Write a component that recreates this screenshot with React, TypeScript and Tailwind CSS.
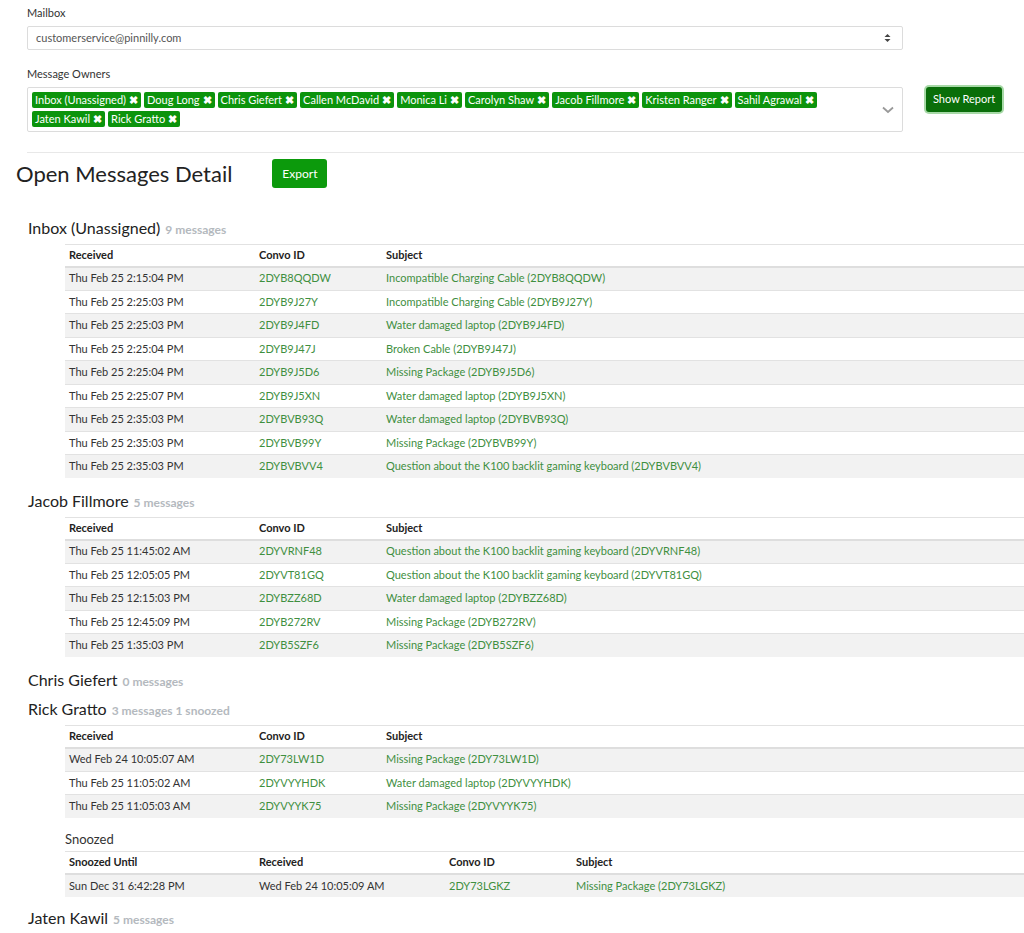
import React from "react";

type Row = [string, string, string];

const inbox: Row[] = [
  ["Thu Feb 25 2:15:04 PM", "2DYB8QQDW", "Incompatible Charging Cable (2DYB8QQDW)"],
  ["Thu Feb 25 2:25:03 PM", "2DYB9J27Y", "Incompatible Charging Cable (2DYB9J27Y)"],
  ["Thu Feb 25 2:25:03 PM", "2DYB9J4FD", "Water damaged laptop (2DYB9J4FD)"],
  ["Thu Feb 25 2:25:04 PM", "2DYB9J47J", "Broken Cable (2DYB9J47J)"],
  ["Thu Feb 25 2:25:04 PM", "2DYB9J5D6", "Missing Package (2DYB9J5D6)"],
  ["Thu Feb 25 2:25:07 PM", "2DYB9J5XN", "Water damaged laptop (2DYB9J5XN)"],
  ["Thu Feb 25 2:35:03 PM", "2DYBVB93Q", "Water damaged laptop (2DYBVB93Q)"],
  ["Thu Feb 25 2:35:03 PM", "2DYBVB99Y", "Missing Package (2DYBVB99Y)"],
  ["Thu Feb 25 2:35:03 PM", "2DYBVBVV4", "Question about the K100 backlit gaming keyboard (2DYBVBVV4)"],
];

const jacob: Row[] = [
  ["Thu Feb 25 11:45:02 AM", "2DYVRNF48", "Question about the K100 backlit gaming keyboard (2DYVRNF48)"],
  ["Thu Feb 25 12:05:05 PM", "2DYVT81GQ", "Question about the K100 backlit gaming keyboard (2DYVT81GQ)"],
  ["Thu Feb 25 12:15:03 PM", "2DYBZZ68D", "Water damaged laptop (2DYBZZ68D)"],
  ["Thu Feb 25 12:45:09 PM", "2DYB272RV", "Missing Package (2DYB272RV)"],
  ["Thu Feb 25 1:35:03 PM", "2DYB5SZF6", "Missing Package (2DYB5SZF6)"],
];

const rick: Row[] = [
  ["Wed Feb 24 10:05:07 AM", "2DY73LW1D", "Missing Package (2DY73LW1D)"],
  ["Thu Feb 25 11:05:02 AM", "2DYVYYHDK", "Water damaged laptop (2DYVYYHDK)"],
  ["Thu Feb 25 11:05:03 AM", "2DYVYYK75", "Missing Package (2DYVYYK75)"],
];

const owners = [
  "Inbox (Unassigned)",
  "Doug Long",
  "Chris Giefert",
  "Callen McDavid",
  "Monica Li",
  "Carolyn Shaw",
  "Jacob Fillmore",
  "Kristen Ranger",
  "Sahil Agrawal",
  "Jaten Kawil",
  "Rick Gratto",
];

function Tag({ name }: { name: string }) {
  return (
    <span className="inline-flex items-center h-[16px] px-[3px] rounded-[2px] bg-[#0c940c] text-white text-[11px] leading-[16px] gap-[3px]">
      {name}
      <span className="font-bold text-[11px]">✖</span>
    </span>
  );
}

function MsgTable({ rows }: { rows: Row[] }) {
  return (
    <table className="w-[959px] border-collapse text-[11px] table-fixed">
      <colgroup>
        <col className="w-[190px]" />
        <col className="w-[127px]" />
        <col />
      </colgroup>
      <thead>
        <tr className="border-t border-[#e2e2e2] border-b-2 border-b-[#dedede]">
          <th className="text-left font-bold px-[4px] h-[22px] text-[#222]">Received</th>
          <th className="text-left font-bold px-[4px] text-[#222]">Convo ID</th>
          <th className="text-left font-bold px-[4px] text-[#222]">Subject</th>
        </tr>
      </thead>
      <tbody>
        {rows.map((r, i) => (
          <tr key={i} className={(i % 2 === 0 ? "bg-[#f2f2f2] " : "bg-white ") + "border-t border-[#e2e2e2]"}>
            <td className="px-[4px] h-[23.5px] text-[#333]">{r[0]}</td>
            <td className="px-[4px] text-[#3f8f3f]">{r[1]}</td>
            <td className="px-[4px] text-[#3f8f3f]">{r[2]}</td>
          </tr>
        ))}
      </tbody>
    </table>
  );
}

function SectionHead({ name, meta }: { name: string; meta: string }) {
  return (
    <div className="pl-[28px] flex items-baseline gap-[5px] h-[18px]">
      <span className="text-[16px] text-[#222] leading-[18px]">{name}</span>
      <span className="text-[12px] font-bold text-[#b4b9be]">{meta}</span>
    </div>
  );
}

export default function App() {
  return (
    <div className="w-[1024px] overflow-hidden bg-white text-[#333]" style={{ fontFamily: "Lato, 'Liberation Sans', sans-serif" }}>
      <div className="pl-[27px] pt-[5px]">
        <div className="text-[11px] text-[#333] h-[15px] leading-[15px]">Mailbox</div>
        <div className="mt-[6px] w-[876px] h-[24px] border border-[#dcdcdc] rounded-[2px] flex items-center justify-between px-[8px]">
          <span className="text-[11px] text-[#555]">customerservice@pinnilly.com</span>
          <svg width="7" height="10" viewBox="0 0 7 10" className="mr-[3px]">
            <path d="M3.5 1 L6.5 4 H0.5 Z" fill="#444" />
            <path d="M3.5 9 L6.5 6 H0.5 Z" fill="#444" />
          </svg>
        </div>
        <div className="mt-[16px] text-[11px] text-[#333] h-[15px] leading-[15px]">Message Owners</div>
        <div className="mt-[6px] flex items-start gap-[23px]">
          <div className="w-[876px] h-[45px] border border-[#dcdcdc] rounded-[2px] flex items-start justify-between pl-[4px] pr-[6px] pt-[4px]">
            <div className="flex flex-wrap gap-x-[3px] gap-y-[3px] w-[800px]">
              {owners.map((o) => (
                <Tag key={o} name={o} />
              ))}
            </div>
            <svg width="12" height="8" viewBox="0 0 12 8" className="mt-[14px] mr-[2px]">
              <path d="M1 1.5 L6 6 L11 1.5" stroke="#999" strokeWidth="1.8" fill="none" />
            </svg>
          </div>
          <button className="h-[25px] px-[7px] rounded-[3px] bg-[#0a6e0a] text-white text-[11px] shadow-[0_0_0_2px_rgba(60,170,60,0.45)]">
            Show Report
          </button>
        </div>
        <div className="mt-[20px] border-t border-[#e8e8e8]" />
      </div>
      <div className="pl-[16px] mt-[6px] flex items-center gap-[40px] h-[29px]">
        <h1 className="text-[22px] text-[#222] leading-[29px]">Open Messages Detail</h1>
        <button className="h-[29px] w-[55px] rounded-[3px] bg-[#0c9a0c] text-white text-[12px]">Export</button>
      </div>

      <div className="mt-[31px]">
        <SectionHead name="Inbox (Unassigned)" meta="9 messages" />
        <div className="pl-[65px] mt-[7px]">
          <MsgTable rows={inbox} />
        </div>
      </div>

      <div className="mt-[14px]">
        <SectionHead name="Jacob Fillmore" meta="5 messages" />
        <div className="pl-[65px] mt-[7px]">
          <MsgTable rows={jacob} />
        </div>
      </div>

      <div className="mt-[14px]">
        <SectionHead name="Chris Giefert" meta="0 messages" />
      </div>

      <div className="mt-[11px]">
        <SectionHead name="Rick Gratto" meta="3 messages 1 snoozed" />
        <div className="pl-[65px] mt-[7px]">
          <MsgTable rows={rick} />
          <div className="mt-[12px] text-[13px] text-[#333] h-[18px] leading-[18px]">Snoozed</div>
          <table className="mt-[3px] w-[959px] border-collapse text-[11px] table-fixed">
            <colgroup>
              <col className="w-[190px]" />
              <col className="w-[190px]" />
              <col className="w-[127px]" />
              <col />
            </colgroup>
            <thead>
              <tr className="border-t border-[#e2e2e2] border-b-2 border-b-[#dedede]">
                <th className="text-left font-bold px-[4px] h-[22px] text-[#222]">Snoozed Until</th>
                <th className="text-left font-bold px-[4px] text-[#222]">Received</th>
                <th className="text-left font-bold px-[4px] text-[#222]">Convo ID</th>
                <th className="text-left font-bold px-[4px] text-[#222]">Subject</th>
              </tr>
            </thead>
            <tbody>
              <tr className="bg-[#f2f2f2] border-t border-[#e2e2e2]">
                <td className="px-[4px] h-[23.5px] text-[#333]">Sun Dec 31 6:42:28 PM</td>
                <td className="px-[4px] text-[#333]">Wed Feb 24 10:05:09 AM</td>
                <td className="px-[4px] text-[#3f8f3f]">2DY73LGKZ</td>
                <td className="px-[4px] text-[#3f8f3f]">Missing Package (2DY73LGKZ)</td>
              </tr>
            </tbody>
          </table>
        </div>
      </div>

      <div className="mt-[12px] pb-[20px]">
        <SectionHead name="Jaten Kawil" meta="5 messages" />
      </div>
    </div>
  );
}
